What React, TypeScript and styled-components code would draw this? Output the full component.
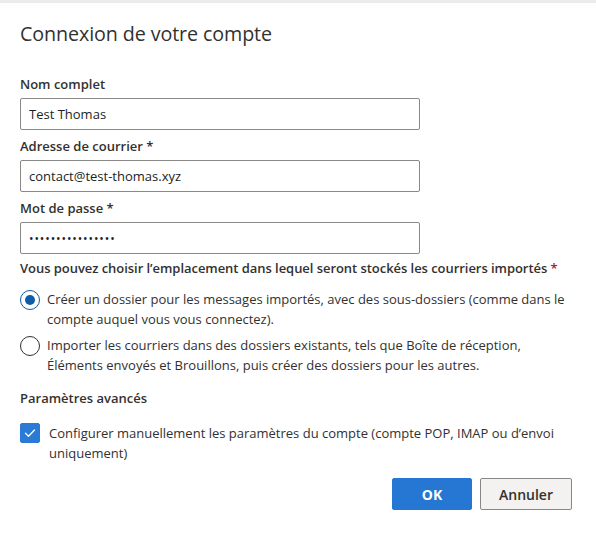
import React, { useState } from 'react';
import styled, { createGlobalStyle } from 'styled-components';

const GlobalStyle = createGlobalStyle`
  html, body {
    margin: 0;
    padding: 0;
    background: #ffffff;
  }
  body {
    font-family: 'Open Sans', 'Noto Sans', sans-serif;
    color: #323130;
  }
  * {
    box-sizing: border-box;
  }
`;

const Dialog = styled.div`
  width: 596px;
  height: 534px;
  border-top: 3px solid #ebebeb;
  padding: 0 24px 0 20px;
  display: flex;
  flex-direction: column;
  background: #fff;
`;

const Title = styled.h1`
  margin: 17px 0 0;
  font-size: 19.7px;
  line-height: 28px;
  font-weight: 400;
  color: #323130;
  letter-spacing: -0.1px;
`;

const Fields = styled.div`
  margin-top: 26px;
  display: flex;
  flex-direction: column;
  gap: 6px;
`;

const Field = styled.div`
  display: flex;
  flex-direction: column;
  gap: 4px;
`;

const Label = styled.label`
  font-size: 13px;
  line-height: 20px;
  font-weight: 600;
  color: #323130;
`;

const Required = styled.span`
  color: ${(p: { $red?: boolean }) => (p.$red ? '#a4262c' : 'inherit')};
`;

const Input = styled.input`
  width: 400px;
  height: 32px;
  border: 1px solid #8a8886;
  border-radius: 2px;
  padding: 0 8px;
  font-family: inherit;
  font-size: 13px;
  color: #201f1e;
  outline: none;
  background: #fff;

  &[type='password'] {
    letter-spacing: 0.9px;
    font-size: 12px;
  }
`;

const Question = styled.div`
  margin-top: 4px;
  font-size: 13px;
  line-height: 20px;
  font-weight: 600;
  color: #323130;
  letter-spacing: -0.05px;
`;

const RadioGroup = styled.div`
  margin-top: 11px;
  display: flex;
  flex-direction: column;
  gap: 6px;
`;

const Option = styled.label`
  display: flex;
  align-items: flex-start;
  gap: 7px;
  cursor: pointer;
`;

const RadioCircle = styled.span<{ $checked: boolean }>`
  flex: none;
  width: 20px;
  height: 20px;
  margin-top: 1px;
  border-radius: 50%;
  border: 1px solid ${(p) => (p.$checked ? '#0f5ca8' : '#323130')};
  display: flex;
  align-items: center;
  justify-content: center;

  &::after {
    content: '';
    width: 10px;
    height: 10px;
    border-radius: 50%;
    background: ${(p) => (p.$checked ? '#0f5ca8' : 'transparent')};
  }
`;

const OptionText = styled.span`
  font-size: 13px;
  line-height: 20px;
  color: #323130;
  max-width: 525px;
`;

const SectionTitle = styled.div`
  margin-top: 13px;
  font-size: 13px;
  line-height: 20px;
  font-weight: 600;
  color: #323130;
`;

const CheckRow = styled.label`
  margin-top: 15px;
  display: flex;
  align-items: flex-start;
  gap: 9px;
  cursor: pointer;
`;

const CheckBox = styled.span<{ $checked: boolean }>`
  flex: none;
  width: 20px;
  height: 20px;
  border-radius: 2px;
  background: ${(p) => (p.$checked ? '#2b7bd6' : '#fff')};
  border: 1px solid ${(p) => (p.$checked ? '#2b7bd6' : '#323130')};
  display: flex;
  align-items: center;
  justify-content: center;
`;

const Footer = styled.div`
  margin-top: 15px;
  display: flex;
  justify-content: flex-end;
  gap: 8px;
`;

const Button = styled.button<{ $primary?: boolean }>`
  height: 32px;
  min-width: ${(p) => (p.$primary ? '80px' : '92px')};
  padding: 0 16px;
  border-radius: 2px;
  font-family: inherit;
  font-size: 14px;
  font-weight: ${(p) => (p.$primary ? 700 : 600)};
  cursor: pointer;
  border: 1px solid ${(p) => (p.$primary ? '#2577d3' : '#8a8886')};
  background: ${(p) => (p.$primary ? '#2577d3' : '#f3f2f1')};
  color: ${(p) => (p.$primary ? '#ffffff' : '#323130')};
`;

const options = [
  'Créer un dossier pour les messages importés, avec des sous-dossiers (comme dans le compte auquel vous vous connectez).',
  'Importer les courriers dans des dossiers existants, tels que Boîte de réception, Éléments envoyés et Brouillons, puis créer des dossiers pour les autres.',
];

export default function App() {
  const [choice, setChoice] = useState(0);
  const [manual, setManual] = useState(true);

  return (
    <>
      <GlobalStyle />
      <Dialog>
        <Title>Connexion de votre compte</Title>

        <Fields>
          <Field>
            <Label>Nom complet</Label>
            <Input defaultValue="Test Thomas" />
          </Field>
          <Field>
            <Label>Adresse de courrier *</Label>
            <Input defaultValue="contact@test-thomas.xyz" />
          </Field>
          <Field>
            <Label>Mot de passe *</Label>
            <Input type="password" defaultValue="motdepasse123456" />
          </Field>
        </Fields>

        <Question>
          Vous pouvez choisir l’emplacement dans lequel seront stockés les courriers importés{' '}
          <Required $red>*</Required>
        </Question>

        <RadioGroup>
          {options.map((text, i) => (
            <Option key={i} onClick={() => setChoice(i)}>
              <RadioCircle $checked={choice === i} />
              <OptionText>{text}</OptionText>
            </Option>
          ))}
        </RadioGroup>

        <SectionTitle>Paramètres avancés</SectionTitle>

        <CheckRow onClick={() => setManual(!manual)}>
          <CheckBox $checked={manual}>
            {manual && (
              <svg width="12" height="12" viewBox="0 0 12 12" fill="none">
                <path d="M1.5 6.2 L4.5 9.2 L10.5 3" stroke="#fff" strokeWidth="1.3" strokeLinecap="round" strokeLinejoin="round" />
              </svg>
            )}
          </CheckBox>
          <OptionText>
            Configurer manuellement les paramètres du compte (compte POP, IMAP ou d’envoi uniquement)
          </OptionText>
        </CheckRow>

        <Footer>
          <Button $primary>OK</Button>
          <Button>Annuler</Button>
        </Footer>
      </Dialog>
    </>
  );
}
